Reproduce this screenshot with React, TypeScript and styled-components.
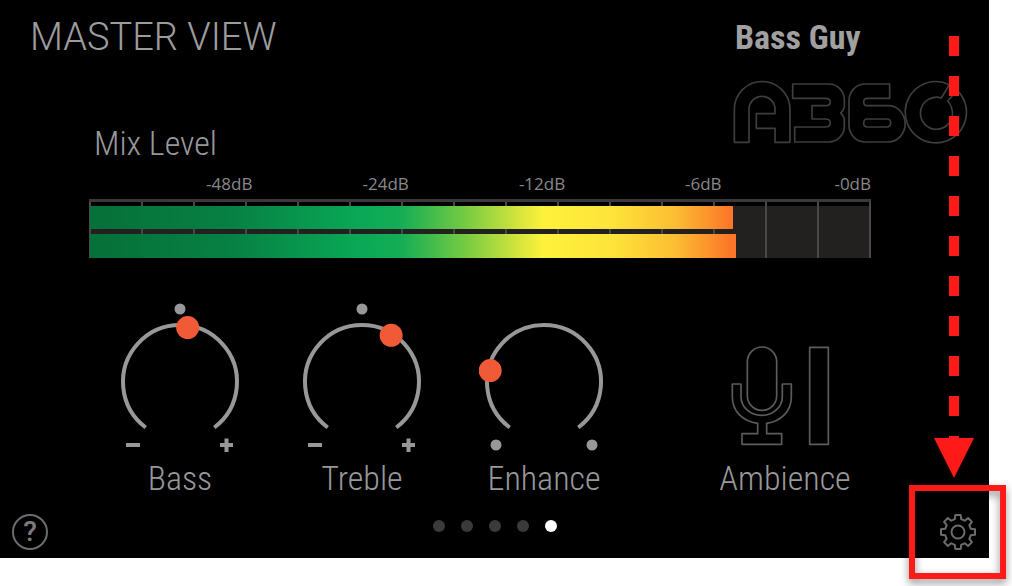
import React, { useState } from 'react';
import styled, { createGlobalStyle } from 'styled-components';

const condensed = '"Roboto Condensed", Roboto, "Liberation Sans", sans-serif';
const line = '#98989a';

const GlobalStyle = createGlobalStyle`
  * { box-sizing: border-box; }
  body { margin: 0; background: #fff; }
  h1, h2, p { margin: 0; }
`;

const Page = styled.div`
  padding: 0 23px 28px 0;
`;

const Panel = styled.main`
  position: relative;
  background: #000;
  color: ${line};
  padding-bottom: 7px;
`;

const Header = styled.header`
  display: grid;
  grid-template-columns: 1fr 236px;
  grid-template-rows: 36px auto;
  row-gap: 26px;
  padding: 18px 20px 0 30px;
`;

const Title = styled.h1`
  font: 300 38px/38px Roboto, "Liberation Sans", sans-serif;
  color: #9c9c9e;
`;

const UserName = styled.p`
  font: 700 34px/38px ${condensed};
  color: #a0a0a0;
  padding-left: 2px;
`;

const SectionTitle = styled.h2`
  font: 300 34px/36px ${condensed};
  padding: 45px 0 0 64px;
`;

const Logo = styled.svg`
  display: block;
  width: 236px;
  height: 65px;
  fill: none;
  stroke: #3e3e40;
  stroke-width: 5;
  stroke-linejoin: round;
`;

const MeterSection = styled.section`
  margin: 11px 118px 0 89px;
`;

const Scale = styled.div`
  display: grid;
  grid-template-columns: repeat(5, 1fr);
  margin: 0 -7px 3px 7px;
  font: 400 17px/24px "Open Sans", "Noto Sans", sans-serif;
  color: #88888a;
  text-align: right;
`;

const ScaleLabel = styled.span`
  &:last-child { padding-right: 7px; }
`;

const MeterFrame = styled.div`
  display: grid;
  height: 59px;
  border-top: 3px solid #3b393c;
`;

const Ticks = styled.div`
  grid-area: 1 / 1;
  display: grid;
  grid-template-columns: repeat(15, 1fr);
  border-left: 2px solid #48484a;
  background: linear-gradient(#000 4px, #232120 4px);
`;

const Tick = styled.span`
  border-right: 2px solid #48484a;
`;

const Bars = styled.div`
  grid-area: 1 / 1;
  display: grid;
  grid-template-rows: 23px 24px;
  row-gap: 5px;
  padding: 4px 0 0 1px;
`;

const Bar = styled.div`
  background: linear-gradient(
    90deg,
    #067039 0,
    #078043 18%,
    #0aa957 35%,
    #16ad55 40%,
    #75cb42 48%,
    #c8e13c 54%,
    #fdf23b 58%,
    #fde33a 67%,
    #fcbd33 75%,
    #fb7628 82%
  );
  background-size: 781px 100%;
`;

const Controls = styled.section`
  display: grid;
  grid-template-columns: 182fr 182fr 182fr 300fr;
  margin: 42px 54px 0 89px;
`;

const Control = styled.label`
  position: relative;
  display: flex;
  flex-direction: column;
  align-items: center;
  gap: 8px;
  font: 300 34px/36px ${condensed};
`;

const Dial = styled.svg`
  display: block;
  width: 130px;
  height: 152px;
  fill: none;
  stroke: ${line};
`;

const DialInput = styled.input`
  position: absolute;
  inset: 0;
  width: 100%;
  height: 100%;
  margin: 0;
  opacity: 0;
  cursor: pointer;
`;

const AmbienceButton = styled.button`
  display: flex;
  flex-direction: column;
  align-items: center;
  justify-content: flex-end;
  gap: 14px;
  padding: 0;
  border: 0;
  background: none;
  color: inherit;
  font: 300 34px/36px ${condensed};
  cursor: pointer;
`;

const MicArt = styled.svg`
  display: block;
  width: 108px;
  height: 101px;
  fill: none;
  stroke: #5c5c5e;
  stroke-width: 5;
  stroke-linejoin: round;
`;

const Footer = styled.footer`
  display: grid;
  grid-template-columns: 1fr auto 1fr;
  align-items: center;
  height: 38px;
  margin-top: 17px;
  padding: 0 12px;
`;

const HelpButton = styled.button`
  width: 36px;
  height: 36px;
  padding: 0;
  border: 2px solid #6c6c6e;
  border-radius: 50%;
  background: none;
  color: #7c7c7e;
  font: 500 28px/32px Roboto, "Liberation Sans", sans-serif;
  cursor: pointer;
`;

const Pager = styled.nav`
  display: flex;
  gap: 16px;
  padding-bottom: 12px;
`;

const PageDot = styled.button<{ $active: boolean }>`
  width: 12px;
  height: 12px;
  padding: 0;
  border: 0;
  border-radius: 50%;
  background: ${(p) => (p.$active ? '#fff' : '#3a3a3a')};
  cursor: pointer;
`;

const SettingsButton = styled.button`
  justify-self: end;
  width: 38px;
  height: 38px;
  padding: 0;
  border: 0;
  background: none;
  cursor: pointer;
`;

const GearArt = styled.svg`
  display: block;
  width: 38px;
  height: 38px;
  fill: none;
  stroke: #6c6c6e;
  stroke-width: 2;
  stroke-linejoin: round;
`;

const Arrow = styled.svg`
  position: absolute;
  top: 36px;
  right: 15px;
  width: 40px;
  height: 442px;
  fill: #ff1a1a;
  pointer-events: none;
`;

const Highlight = styled.div`
  position: absolute;
  right: -17px;
  bottom: -21px;
  width: 97px;
  height: 94px;
  border: 6px solid #ff1a1a;
  filter: drop-shadow(0 4px 4px rgba(0, 0, 0, 0.45));
  pointer-events: none;
`;

/* Point on a dial, with the angle in degrees clockwise from the top. */
const polar = (cx: number, cy: number, r: number, deg: number) => {
  const a = (deg * Math.PI) / 180;
  return [cx + r * Math.sin(a), cy - r * Math.cos(a)];
};

const SWEEP = 143;

type KnobProps = { name: string; initial: number; bipolar?: boolean };

function Knob({ name, initial, bipolar = false }: KnobProps) {
  const [angle, setAngle] = useState(initial);
  const [x1, y1] = polar(65, 82, 57, -SWEEP);
  const [x2, y2] = polar(65, 82, 57, SWEEP);
  const [tx, ty] = polar(65, 82, 55, angle);
  return (
    <Control>
      <Dial viewBox="0 0 130 152" aria-hidden="true">
        <path d={`M${x1} ${y1} A57 57 0 1 1 ${x2} ${y2}`} strokeWidth="4" />
        {bipolar ? (
          <>
            <circle cx="65" cy="9" r="5.5" fill={line} stroke="none" />
            <path d="M11 145 H25 M105 145 H118 M111.5 138.5 V152" strokeWidth="4" />
          </>
        ) : (
          <>
            <circle cx="17" cy="145" r="5.5" fill={line} stroke="none" />
            <circle cx="113" cy="145" r="5.5" fill={line} stroke="none" />
          </>
        )}
        <circle cx={tx} cy={ty} r="11.5" fill="#f15a36" stroke="none" />
      </Dial>
      {name}
      <DialInput
        type="range"
        min={-SWEEP}
        max={SWEEP}
        value={angle}
        onChange={(e) => setAngle(Number(e.target.value))}
      />
    </Control>
  );
}

const gearPath = (() => {
  const points: string[] = [];
  for (let i = 0; i < 8; i++) {
    const mid = i * 45;
    [[-14, 13.2], [-9, 17.2], [9, 17.2], [14, 13.2]].forEach(([offset, r]) => {
      const [x, y] = polar(19, 19, r, mid + offset);
      points.push(`${x.toFixed(2)} ${y.toFixed(2)}`);
    });
  }
  return `M${points.join(' L')} Z`;
})();

const dashes = [0, 40, 80, 120, 160, 200, 240, 280, 320, 360];
const scale = ['-48dB', '-24dB', '-12dB', '-6dB', '-0dB'];
const levels = [82.3, 82.7];

export default function App() {
  const [page, setPage] = useState(4);
  return (
    <Page>
      <GlobalStyle />
      <Panel>
        <Header>
          <Title>MASTER VIEW</Title>
          <UserName>Bass Guy</UserName>
          <SectionTitle>Mix Level</SectionTitle>
          <Logo viewBox="39 240 708 195" role="img" aria-label="A360">
            <path d="M43 427 V328 a83 83 0 0 1 167 0 V427 H165 V385 H109 V341 H165 V328 a39 39 0 0 0 -78 0 V427 Z" />
            <path d="M218 252 H326 a47 47 0 0 1 47 47 V322 q-3 10 -11 17 q8 7 11 17 V379 a47 47 0 0 1 -47 47 H224 V381 H316 q15 0 15 -12 t-15 -12 H276 V317 H316 q15 0 15 -11 t-15 -11 H218 Z" />
            <path d="M509 252 V295 H442 q-11 0 -11 11 t11 11 H505 a50 54 0 0 1 0 109 H435 a48 50 0 0 1 -48 -50 V302 a48 50 0 0 1 48 -50 Z" />
            <path d="M442 357 H500 q12 0 12 12 t-12 12 H442 q-11 0 -11 -12 t11 -12 Z" />
            <path d="M688 254 A92 92 0 1 0 712 271 L683 303 Q692 312 695 325 A48 48 0 1 1 664 294 Z" />
          </Logo>
        </Header>

        <MeterSection aria-label="Mix Level">
          <Scale>
            {scale.map((s) => (
              <ScaleLabel key={s}>{s}</ScaleLabel>
            ))}
          </Scale>
          <MeterFrame>
            <Ticks>
              {Array.from({ length: 15 }, (_, i) => (
                <Tick key={i} />
              ))}
            </Ticks>
            <Bars>
              {levels.map((level) => (
                <Bar key={level} style={{ width: `${level}%` }} />
              ))}
            </Bars>
          </MeterFrame>
        </MeterSection>

        <Controls>
          <Knob name="Bass" initial={8} bipolar />
          <Knob name="Treble" initial={32} bipolar />
          <Knob name="Enhance" initial={-78} />
          <AmbienceButton type="button">
            <MicArt viewBox="94 45 324 303" aria-hidden="true">
              <rect x="143" y="51" width="88" height="190" rx="44" />
              <path d="M98 162 H124 V200 a62 56 0 0 0 124 0 V162 H275 V200 C275 245 243 274 201 280 V311 H246 V343 H127 V311 H174 V280 C130 274 98 245 98 200 Z" />
              <rect x="330" y="52" width="56" height="291" />
            </MicArt>
            Ambience
          </AmbienceButton>
        </Controls>

        <Footer>
          <HelpButton type="button" aria-label="Help">?</HelpButton>
          <Pager aria-label="Pages">
            {[0, 1, 2, 3, 4].map((i) => (
              <PageDot
                key={i}
                type="button"
                aria-label={`Page ${i + 1}`}
                $active={i === page}
                onClick={() => setPage(i)}
              />
            ))}
          </Pager>
          <SettingsButton type="button" aria-label="Settings">
            <GearArt viewBox="0 0 38 38" aria-hidden="true">
              <path d={gearPath} />
              <circle cx="19" cy="19" r="6.5" />
            </GearArt>
          </SettingsButton>
        </Footer>

        <Arrow viewBox="0 0 40 442" aria-hidden="true">
          {dashes.map((y) => (
            <rect key={y} x="15" y={y} width="10" height="20" />
          ))}
          <path d="M15 400 H25 V402 H40 L20 442 L0 402 H15 Z" />
        </Arrow>
        <Highlight />
      </Panel>
    </Page>
  );
}
